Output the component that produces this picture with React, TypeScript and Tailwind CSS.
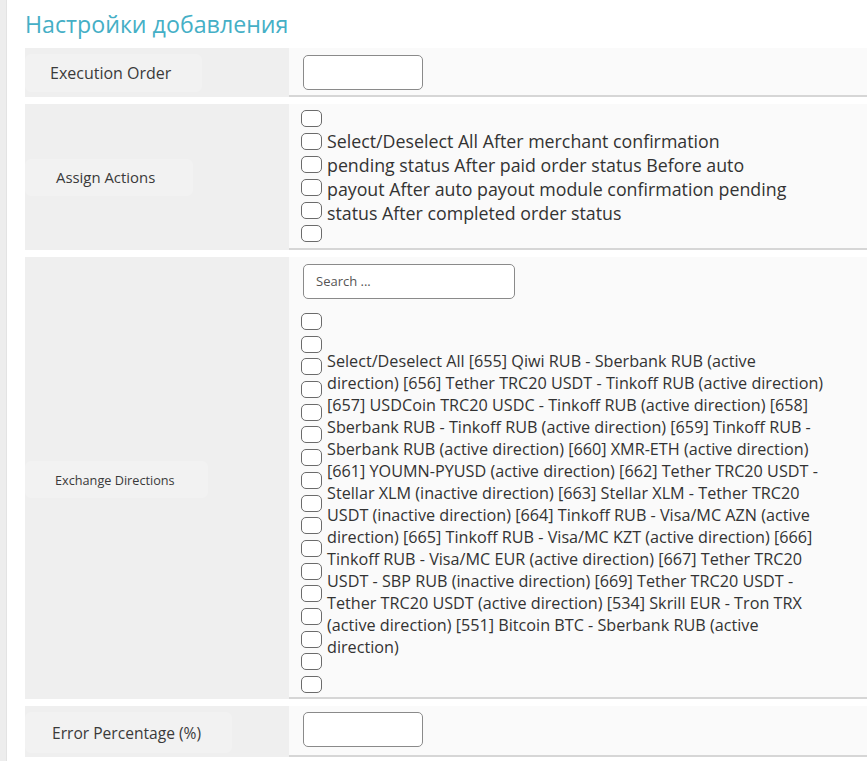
import React from 'react';

const font = { fontFamily: '"Open Sans", "Noto Sans", sans-serif' };

const Box = () => (
  <div className="w-[21px] h-[17px] rounded-[5px] border border-[#6b6b6b] bg-white shrink-0" />
);

const Label: React.FC<{ text: string; className: string; box: string }> = ({ text, className, box }) => (
  <div className="w-[264px] shrink-0 bg-[#efefef] flex items-center">
    <div className={`rounded-md bg-[#f2f2f2] flex items-center ${box}`}>
      <span className={`text-[#3a3a3a] whitespace-nowrap ${className}`}>{text}</span>
    </div>
  </div>
);

const assignLines = [
  'Select/Deselect All After merchant confirmation',
  'pending status After paid order status Before auto',
  'payout After auto payout module confirmation pending',
  'status After completed order status',
];

const exchangeLines = [
  'Select/Deselect All [655] Qiwi RUB - Sberbank RUB (active',
  'direction) [656] Tether TRC20 USDT - Tinkoff RUB (active direction)',
  '[657] USDCoin TRC20 USDC - Tinkoff RUB (active direction) [658]',
  'Sberbank RUB - Tinkoff RUB (active direction) [659] Tinkoff RUB -',
  'Sberbank RUB (active direction) [660] XMR-ETH (active direction)',
  '[661] YOUMN-PYUSD (active direction) [662] Tether TRC20 USDT -',
  'Stellar XLM (inactive direction) [663] Stellar XLM - Tether TRC20',
  'USDT (inactive direction) [664] Tinkoff RUB - Visa/MC AZN (active',
  'direction) [665] Tinkoff RUB - Visa/MC KZT (active direction) [666]',
  'Tinkoff RUB - Visa/MC EUR (active direction) [667] Tether TRC20',
  'USDT - SBP RUB (inactive direction) [669] Tether TRC20 USDT -',
  'Tether TRC20 USDT (active direction) [534] Skrill EUR - Tron TRX',
  '(active direction) [551] Bitcoin BTC - Sberbank RUB (active',
  'direction)',
];

export default function App() {
  return (
    <div className="w-[867px] h-[761px] overflow-hidden bg-white flex" style={font}>
      {/* left strip */}
      <div className="w-[7px] shrink-0 bg-[#ededed] border-r border-[#e3e3e3]" />

      <div className="flex-1 pl-[18px]">
        <h2 className="pt-[8px] mb-[8px] text-[23.2px] leading-[32px] text-[#45afc6] font-normal">
          Настройки добавления
        </h2>

        <div className="flex flex-col gap-[7px]">
          {/* Execution Order */}
          <div className="flex h-[49px]">
            <Label text="Execution Order" className="text-[16px] pl-[25px]" box="w-[177px] h-[38px]" />
            <div className="flex-1 bg-[#fafafa] border-b-2 border-[#d6d6d6] pl-[14px] pt-[7px]">
              <div className="w-[120px] h-[35px] rounded-[5px] border border-[#8a8a8a] bg-white" />
            </div>
          </div>

          {/* Assign Actions */}
          <div className="flex h-[146px]">
            <Label text="Assign Actions" className="text-[14.9px] pl-[31px]" box="w-[168px] h-[37px]" />
            <div className="flex-1 bg-[#fafafa] border-b-2 border-[#d6d6d6] flex pl-[12px]">
              <div className="flex flex-col justify-between pt-[6px] pb-[6px]">
                {[0, 1, 2, 3, 4, 5].map((i) => (
                  <Box key={i} />
                ))}
              </div>
              <div className="pt-[25px] pl-[5px] text-[17.8px] leading-[24px] text-[#333]">
                {assignLines.map((l) => (
                  <div key={l} className="whitespace-nowrap">{l}</div>
                ))}
              </div>
            </div>
          </div>

          {/* Exchange Directions */}
          <div className="flex h-[442px]">
            <Label text="Exchange Directions" className="text-[12.7px] pl-[30px] pt-[3px]" box="w-[183px] h-[37px] mt-[3px]" />
            <div className="flex-1 bg-[#fafafa] border-b-2 border-[#d6d6d6] pl-[12px] pt-[7px] flex flex-col">
              <div className="ml-[2px] w-[212px] h-[35px] rounded-[5px] border border-[#8a8a8a] bg-white flex items-center pl-[12px] text-[13px] text-[#555]">
                Search ...
              </div>
              <div className="flex mt-[14px]">
                <div className="flex flex-col justify-between h-[380px]">
                  {Array.from({ length: 17 }).map((_, i) => (
                    <Box key={i} />
                  ))}
                </div>
                <div className="pt-[37px] pl-[5px] text-[16.2px] leading-[22px] text-[#333]">
                  {exchangeLines.map((l, i) => (
                    <div key={i} className="whitespace-nowrap">{l}</div>
                  ))}
                </div>
              </div>
            </div>
          </div>

          {/* Error Percentage */}
          <div className="flex h-[51px]">
            <Label text="Error Percentage (%)" className="text-[15.6px] pl-[27px] pt-[3px]" box="w-[207px] h-[41px] mt-[2px]" />
            <div className="flex-1 bg-[#fafafa] border-b-2 border-[#d6d6d6] pl-[14px] pt-[6px]">
              <div className="w-[120px] h-[35px] rounded-[5px] border border-[#8a8a8a] bg-white" />
            </div>
          </div>
        </div>
      </div>
    </div>
  );
}
